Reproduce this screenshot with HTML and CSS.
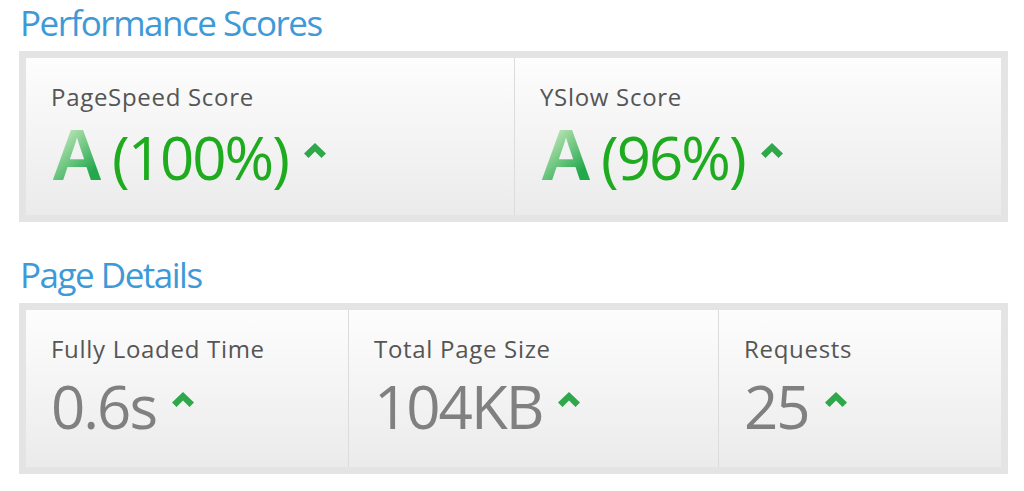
FILE: index.html
```html
<!DOCTYPE html>
<html lang="en">

<head>
    <meta charset="UTF-8">
    <title>Performance Report</title>
    <link rel="stylesheet" href="styles.css">
</head>

<body>
    <h2 class="titulo">Performance Scores</h2>
    <div class="marco marco-dos">
        <div class="celda">
            <div class="etiqueta">PageSpeed Score</div>
            <div class="valor">
                <span class="grado">A</span>
                <span class="nota">(100%)</span>
                <svg class="flecha" viewBox="0 0 22 15"><path d="M0 10.5 L11 0 L22 10.5 L17.5 15 L11 8.5 L4.5 15 Z" /></svg>
            </div>
        </div>
        <div class="celda">
            <div class="etiqueta">YSlow Score</div>
            <div class="valor">
                <span class="grado">A</span>
                <span class="nota">(96%)</span>
                <svg class="flecha" viewBox="0 0 22 15"><path d="M0 10.5 L11 0 L22 10.5 L17.5 15 L11 8.5 L4.5 15 Z" /></svg>
            </div>
        </div>
    </div>

    <h2 class="titulo segundo">Page Details</h2>
    <div class="marco marco-tres">
        <div class="celda">
            <div class="etiqueta">Fully Loaded Time</div>
            <div class="valor">
                <span class="dato">0.6s</span>
                <svg class="flecha" viewBox="0 0 22 15"><path d="M0 10.5 L11 0 L22 10.5 L17.5 15 L11 8.5 L4.5 15 Z" /></svg>
            </div>
        </div>
        <div class="celda">
            <div class="etiqueta">Total Page Size</div>
            <div class="valor">
                <span class="dato">104KB</span>
                <svg class="flecha" viewBox="0 0 22 15"><path d="M0 10.5 L11 0 L22 10.5 L17.5 15 L11 8.5 L4.5 15 Z" /></svg>
            </div>
        </div>
        <div class="celda">
            <div class="etiqueta">Requests</div>
            <div class="valor">
                <span class="dato">25</span>
                <svg class="flecha" viewBox="0 0 22 15"><path d="M0 10.5 L11 0 L22 10.5 L17.5 15 L11 8.5 L4.5 15 Z" /></svg>
            </div>
        </div>
    </div>
</body>

</html>
```

FILE: styles.css
```css
body {
    margin: 0;
    padding: 0;
    background: #fff;
    font-family: "Open Sans", Arial, sans-serif;
}

.titulo {
    margin: 0 0 8px 20px;
    padding-top: 3px;
    font-size: 35px;
    line-height: 40px;
    font-weight: 400;
    letter-spacing: -1.5px;
    color: #3d9ad8;
}

.segundo {
    margin-top: 30px;
}

/* marco gris alrededor de las celdas */
.marco {
    display: grid;
    margin-left: 19px;
    width: 989px;
    box-sizing: border-box;
    border: 7px solid #e4e4e4;
}

.marco-dos {
    grid-template-columns: 488px 1fr;
}

.marco-tres {
    grid-template-columns: 322px 370px 1fr;
}

.celda {
    height: 157px;
    box-sizing: border-box;
    padding: 24px 0 0 25px;
    background: linear-gradient(to bottom, #fdfdfd, #ebebeb);
}

.celda + .celda {
    border-left: 1px solid #dcdcdc;
}

.etiqueta {
    font-size: 24px;
    line-height: 30px;
    color: #555;
    letter-spacing: 0.7px;
}

.valor {
    display: flex;
    align-items: baseline;
    margin-top: 15px;
    height: 60px;
    line-height: 60px;
}

.marco-tres .valor {
    margin-top: 12px;
}

/* letra de la nota con degradado */
.grado {
    font-family: "Liberation Sans", Arial, sans-serif;
    font-size: 72px;
    line-height: 56px;
    font-weight: 700;
    margin-right: 9px;
    background: linear-gradient(135deg, #b5e2b2 20%, #23a84c 80%);
    -webkit-background-clip: text;
    background-clip: text;
    color: transparent;
}

.nota {
    font-size: 60px;
    color: #1fab1f;
    letter-spacing: -2px;
}

.dato {
    font-size: 60px;
    color: #808080;
    letter-spacing: -2px;
}

.flecha {
    align-self: flex-start;
    width: 22px;
    height: 15px;
    margin: 16px 0 0 16px;
    fill: #2fa84c;
}
```
